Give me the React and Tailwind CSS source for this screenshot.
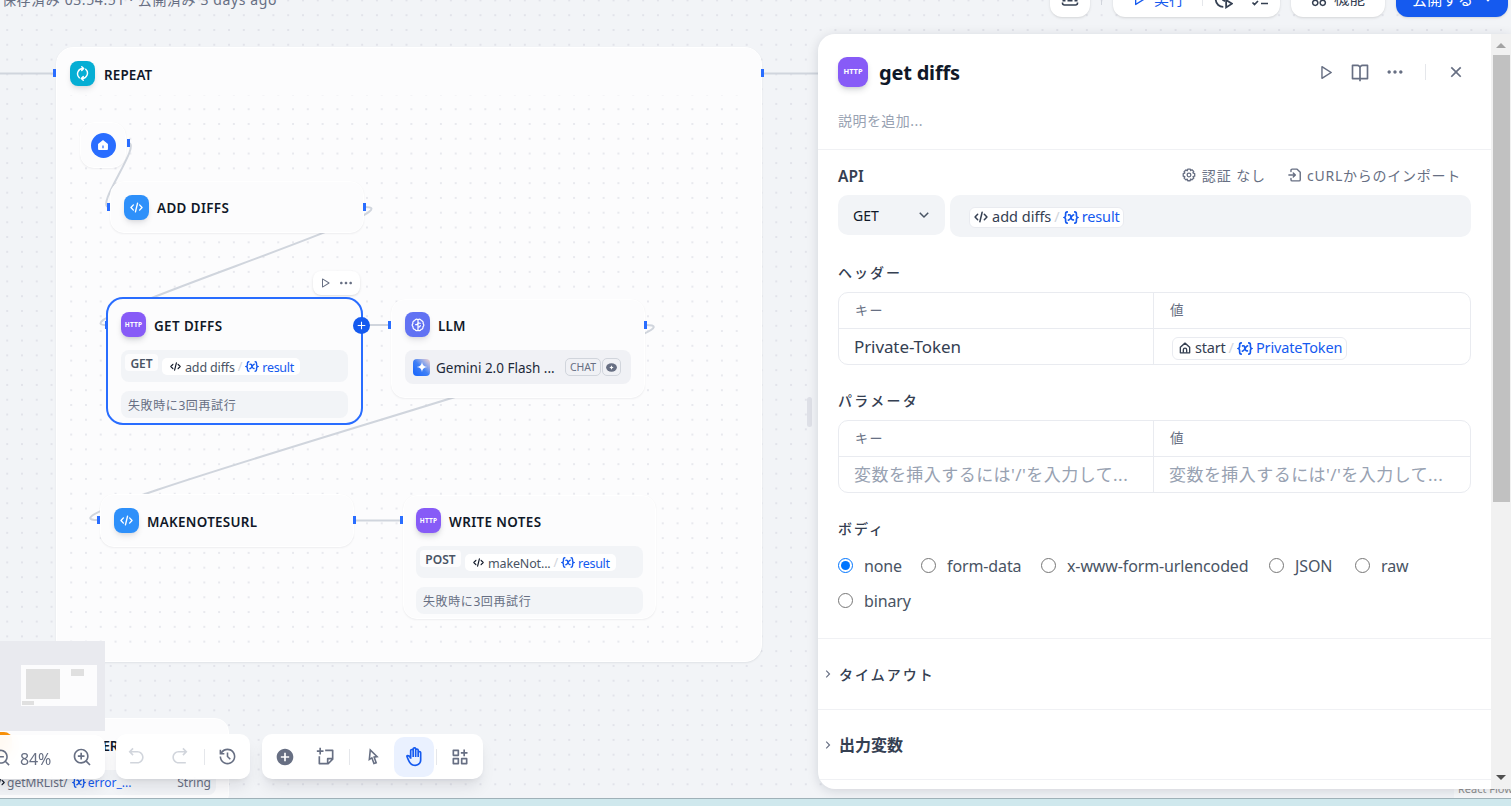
import React, { useState } from 'react';
import {
  RiAddCircleFill,
  RiAddLine,
  RiApps2AddLine,
  RiArrowDownSLine,
  RiArrowGoBackLine,
  RiArrowGoForwardLine,
  RiArrowRightSLine,
  RiBookOpenLine,
  RiCloseLine,
  RiCursorLine,
  RiFunctionAddLine,
  RiHand,
  RiHistoryLine,
  RiMoreFill,
  RiPlayLargeLine,
  RiStickyNoteAddLine,
  RiZoomInLine,
  RiZoomOutLine,
} from 'react-icons/ri';

const CodeIcon = ({ className }) => (
  <svg viewBox="0 0 16 16" className={className} fill="none" stroke="currentColor" strokeWidth="1.7" strokeLinecap="round" strokeLinejoin="round">
    <path d="M4.2 4.8 1.2 8l3 3.2M11.8 4.8l3 3.2-3 3.2M9.3 2.6 6.7 13.4" />
  </svg>
);

const LoopIcon = ({ className }) => (
  <svg viewBox="0 0 16 16" className={className} fill="none" stroke="currentColor" strokeWidth="1.5" strokeLinecap="round" strokeLinejoin="round">
    <path d="M4.600 12.600A5.700 5.700 0 0 1 8.800 2.700M7.200.800 9.300 2.800 7.200 4.900M11.400 3.400A5.700 5.700 0 0 1 7.200 13.300M8.800 11.100 6.700 13.200l2.100 2" />
  </svg>
);

const HomeIcon = ({ className }) => (
  <svg viewBox="0 0 16 16" className={className} fill="none" stroke="currentColor" strokeWidth="1.8" strokeLinejoin="round">
    <path d="M1.800 7 8 1.500 14.200 7v7.400H1.800z" />
    <path d="M5.800 14.400V10.400a2.200 2.200 0 0 1 4.400 0v4" />
  </svg>
);

const HomeSolidIcon = ({ className }) => (
  <svg viewBox="0 0 16 16" className={className} fill="currentColor">
    <path fillRule="evenodd" d="M8 1.2 14.2 6.2a1 1 0 0 1 .4.8v6.4a1.2 1.2 0 0 1-1.2 1.2H2.6a1.2 1.2 0 0 1-1.2-1.2V7a1 1 0 0 1 .4-.8zM7.2 8.6v3.6h1.6V8.6z" />
  </svg>
);

const VariableIcon = ({ className }) => (
  <svg viewBox="0 0 16 14" className={className} fill="none" stroke="currentColor" strokeWidth="1.8" strokeLinecap="round">
    <path d="M4 1C2.4 1 2.2 2 2.2 3.2v1.6C2.2 6 1.8 6.6.9 7c.9.4 1.3 1 1.3 2.2v1.6C2.2 12 2.4 13 4 13M12 1c1.600 0 1.800 1 1.800 2.200v1.600c0 1.200.4 1.800 1.300 2.200-.9.4-1.300 1-1.300 2.200v1.600c0 1.200-.2 2.200-1.800 2.200" />
    <path d="M5.4 4.2c1.800-.6 2 .4 2.400 2.400.5 2.200.8 3.400 2.800 3M10.800 4.200C8.600 4 7.600 10.200 5.200 9.800" />
  </svg>
);

const BrainIcon = ({ className }) => (
  <svg viewBox="0 0 16 16" className={className} fill="none" stroke="currentColor" strokeWidth="1.4" strokeLinecap="round" strokeLinejoin="round">
    <path d="M8 2.2C6.6.8 4.5 1.4 4.2 3 2.400 3.400 1.700 5 2.200 6.300 1 7.400 1.100 9 2.300 9.900c-.3 1.700.7 2.900 2.200 3.100C5.100 14.700 7 15 8 13.800 9 15 10.900 14.700 11.500 13c1.500-.2 2.500-1.400 2.200-3.100 1.200-.9 1.300-2.500.1-3.600.5-1.300-.2-2.900-2-3.300C11.500 1.400 9.400.8 8 2.200zM8 2.200v11.600M5.300 7.600c1.500 0 2.700-.5 2.700-2.200M10.700 6c-1.500 0-2.700-.3-2.700-1.300M8 10.600c1.400 0 2.500-.5 2.700-1.800" />
  </svg>
);

const GearIcon = ({ className }) => (
  <svg viewBox="0 0 16 16" className={className} fill="none" stroke="currentColor" strokeWidth="1.5" strokeLinejoin="round">
    <path d="M6.500 1.200h3l.4 1.700 1.500-.9 2 2-.9 1.500 2 .9v3l-1.900.4.9 1.700-2.100 2-1.500-.9-.6 2h-2.800l-.5-1.900-1.600.9-2-2 .9-1.600-1.900-.6V6.400l1.800-.6-.8-1.600 2-2 1.600.9z" />
    <circle cx="8" cy="8" r="2.100" />
  </svg>
);

const ImportIcon = ({ className }) => (
  <svg viewBox="0 0 16 16" className={className} fill="none" stroke="currentColor" strokeWidth="1.6" strokeLinecap="round" strokeLinejoin="round">
    <path d="M3.400 4V2.700c0-.9.5-1.400 1.400-1.400h5.600L14 4.900v8.400c0 .9-.5 1.400-1.400 1.400H4.800c-.9 0-1.400-.5-1.400-1.400V12M1 8h7.200M6 5.600 8.400 8 6 10.400" />
  </svg>
);

const PanelRule = () => <div className="h-px shrink-0 bg-[#f0f1f4]" />;

const HttpBadge = ({ className }) => (
  <div className={`flex shrink-0 items-center justify-center bg-[#875bf7] font-bold text-white shadow-md shadow-gray-900/15 ${className}`}>
    HTTP
  </div>
);

const CodeBadge = () => (
  <div className="flex size-[25px] shrink-0 items-center justify-center rounded-[8px] bg-[#2e90fa] text-white shadow-md shadow-gray-900/10">
    <CodeIcon className="size-[13px]" />
  </div>
);

const NodeTitle = ({ children, className = '' }) => (
  <div className={`whitespace-nowrap pt-0.5 text-[13.4px] font-semibold leading-5 text-[#101828] ${className}`}>{children}</div>
);

const nodeShell = 'absolute rounded-[14px] border border-white bg-[#fcfcfd] shadow-[0_1px_2px_rgba(16,24,40,0.06)]';

const handles = [
  [53, 69], [761, 69], [127, 139], [107, 203], [363, 203], [105, 321],
  [388, 321], [644, 321], [97, 516], [353, 516], [400, 516],
];

const edges = [
  'M0 73.500H54',
  'M763 73.500H830',
  'M128 143C143 143 94 207 109 207',
  'M365 207C425 207 47 325 107 325',
  'M362 325H389',
  'M646 325C736 325 8 520 98 520',
  'M355 520.500H401',
];

const DotGrid = ({ id, x, y, className }) => (
  <svg className={className}>
    <pattern id={id} x={x} y={y} width="14.79" height="14.79" patternUnits="userSpaceOnUse">
      <circle cx="1" cy="1" r="1" fill="#dcdee6" />
    </pattern>
    <rect width="100%" height="100%" fill={`url(#${id})`} />
  </svg>
);

const HttpNode = ({ title, method, source, methodClass, sourceClass, titleClass }) => (
  <>
    <div className="flex items-center gap-2">
      <HttpBadge className="size-[25px] rounded-[8px] text-[6.5px] tracking-[0.2px]" />
      <NodeTitle className={titleClass}>{title}</NodeTitle>
    </div>
    <div className="mt-[13px] flex h-8 items-start rounded-lg bg-[#f2f4f7] pl-1">
      <div className={`mt-1 flex h-[17px] items-center justify-center rounded bg-[#fcfcfd] pt-0.5 text-[12px] font-semibold text-[#495464] ${methodClass}`}>{method}</div>
      <div className={`ml-1 mt-2 flex h-[17px] items-center whitespace-nowrap rounded-[5px] bg-white pl-2 text-[12.500px] tracking-[-0.15px] text-[#495464] ${sourceClass}`}>
        <CodeIcon className="mr-1 size-[11px] shrink-0 text-[#101828]" />
        <span className="pt-[3px]">{source}</span>
        <span className="mx-[3px] pt-0.5 text-gray-300">/</span>
        <VariableIcon className="mr-[3px] h-[11px] w-[14px] shrink-0 text-[#155aef]" />
        <span className="pt-[3px] tracking-[-0.3px] text-[#155aef]">result</span>
      </div>
    </div>
    <div className="mt-[9px] flex h-[27px] items-center whitespace-nowrap rounded-lg bg-[#f2f4f7] pl-[7px] pt-0.5 text-[12px] tracking-[0.6px] text-[#676f83]">
      失敗時に3回再試行
    </div>
  </>
);

const Canvas = () => (
  <div className="absolute inset-0">
    <DotGrid id="outer-dots" x="6.2" y="14.2" className="absolute inset-0 size-full" />

    {/* loop container */}
    <div className="absolute left-[56px] top-[47px] h-[615px] w-[706px] rounded-[17px] border border-white bg-[#fcfcfd] shadow-[0_1px_2px_rgba(16,24,40,0.08)]">
      <div className="flex items-center gap-[9px] pl-[13px] pt-[13px]">
        <div className="flex size-[25px] items-center justify-center rounded-[8px] bg-[#06aed4] text-white shadow-md shadow-gray-900/10">
          <LoopIcon className="size-[15px]" />
        </div>
        <NodeTitle className="tracking-[0.15px]">REPEAT</NodeTitle>
      </div>
      <DotGrid id="loop-dots" x="0.2" y="13.2" className="absolute left-[13px] top-[47px] h-[552px] w-[680px] opacity-80" />
    </div>

    <svg className="absolute inset-0 size-full" fill="none" stroke="#d0d5dd" strokeWidth="2">
      {edges.map(d => (
        <path key={d} d={d} />
      ))}
    </svg>

    <div className={`${nodeShell} left-[80px] top-[122px] flex size-[46px] items-center justify-center`}>
      <div className="flex size-[25px] items-center justify-center rounded-full bg-[#296dff] text-white">
        <HomeSolidIcon className="size-3" />
      </div>
    </div>

    <div className={`${nodeShell} left-[110px] top-[181px] flex h-[52px] w-[254px] items-center gap-2 pl-[13px]`}>
      <CodeBadge />
      <NodeTitle className="tracking-[0.4px]">ADD DIFFS</NodeTitle>
    </div>

    <div className="absolute left-[106px] top-[297px] h-[128px] w-[257px] rounded-[17px] border-2 border-[#296dff] bg-[#fcfcfd] px-[13px] pt-[13px]">
      <HttpNode title="GET DIFFS" method="GET" source="add diffs" methodClass="w-[33px]" sourceClass="w-[138px]" titleClass="tracking-[0.4px]" />
    </div>

    <div className={`${nodeShell} left-[391px] top-[299px] h-[99px] w-[254px] px-[13px] pt-[12px]`}>
      <div className="flex items-center gap-2">
        <div className="flex size-[25px] items-center justify-center rounded-[8px] bg-[#6172f3] text-white shadow-md shadow-gray-900/10">
          <BrainIcon className="size-[14px]" />
        </div>
        <NodeTitle className="tracking-[0.2px]">LLM</NodeTitle>
      </div>
      <div className="mt-[13px] flex h-[34px] items-center rounded-lg bg-[#f0f1f5] pl-2">
        <div className="flex size-[17px] items-center justify-center rounded bg-gradient-to-tr from-[#0f62fe] via-[#4080f5] to-[#fbd5cb] text-white">
          <svg viewBox="0 0 16 16" className="size-3" fill="currentColor">
            <path d="M8 1c.7 4.500 2.500 6.300 7 7-4.500.7-6.300 2.500-7 7-.7-4.500-2.500-6.300-7-7 4.500-.7 6.300-2.500 7-7z" />
          </svg>
        </div>
        <div className="ml-1.5 w-[129px] whitespace-nowrap pt-0.5 text-[13.5px] text-[#1d2939]">Gemini 2.0 Flash ...</div>
        <div className="flex h-[18px] w-9 items-center justify-center rounded-[5px] border border-gray-300 pt-0.5 text-[10.500px] text-[#676f83]">CHAT</div>
        <div className="ml-px flex h-[18px] w-[19px] items-center justify-center rounded-[5px] border border-gray-300 text-[#676f83]">
          <svg viewBox="0 0 12 10" className="h-[9px] w-[11px]">
            <ellipse cx="6" cy="5" rx="6" ry="4.600" fill="currentColor" />
            <path d="M6 2.600 6.700 4.300 8.400 5l-1.700.7L6 7.400 5.300 5.700 3.600 5l1.700-.7z" fill="white" />
          </svg>
        </div>
      </div>
    </div>

    <div className={`${nodeShell} left-[100px] top-[494px] flex h-[53px] w-[254px] items-center gap-2 pl-[13px]`}>
      <CodeBadge />
      <NodeTitle className="tracking-[0.3px]">MAKENOTESURL</NodeTitle>
    </div>

    <div className={`${nodeShell} left-[403px] top-[495px] h-[124px] w-[253px] px-[12px] pt-[12px]`}>
      <HttpNode title="WRITE NOTES" method="POST" source="makeNot..." methodClass="w-[41px]" sourceClass="w-[151px]" titleClass="tracking-[0.4px]" />
    </div>

    {handles.map(([left, top]) => (
      <div key={`${left}-${top}`} className="absolute h-2 w-[3px] bg-[#296dff]" style={{ left, top }} />
    ))}

    <div className="absolute left-[353px] top-[317px] flex size-[17px] items-center justify-center rounded-full bg-[#155aef] text-white">
      <RiAddLine className="size-[13px]" />
    </div>
    <div className="absolute left-[313px] top-[271px] flex h-[24px] w-[47px] items-center justify-center gap-[7px] rounded-[8px] bg-white text-[#676f83] shadow">
      <RiPlayLargeLine className="size-3" />
      <RiMoreFill className="size-4" />
    </div>

    {/* node partly hidden by the controls */}
    <div className="absolute left-[-25px] top-[718px] h-[90px] w-[254px] rounded-[14px] border border-white bg-[#fcfcfd]">
      <div className="flex items-center gap-2 pl-[11px] pt-[13px]">
        <div className="size-[25px] rounded-[8px] bg-[#f79009]" />
        <NodeTitle className="w-[98px] pt-0 text-right tracking-[-0.3px]">ER</NodeTitle>
      </div>
      <div className="mx-3 mt-[13px] flex h-[25px] items-center rounded-lg bg-[#f2f4f7] pl-[6px] text-[12px] text-[#676f83]">
        <CodeIcon className="mr-0.5 size-[11px] text-[#101828]" />
        getMRList/
        <VariableIcon className="ml-1 mr-[2px] h-[11px] w-[14px] text-[#155aef]" />
        <span className="text-[#155aef]">error_...</span>
        <span className="ml-auto mr-[5px]">String</span>
      </div>
    </div>
  </div>
);

const BottomControls = () => (
  <>
    <div className="absolute left-0 top-[641px] h-[90px] w-[105px] bg-[#e9eaef]">
      <svg viewBox="0 0 105 90" className="size-full">
        <path d="M21 24h76v41H21z" fill="#fcfcfd" />
        <path d="M26 28h34v30H26zM71 28h13v7H71zM22 60h12v4H22z" fill="#e0e0e0" />
      </svg>
    </div>

    <div className="absolute bottom-[27px] left-[-20px] flex items-end text-[#676f83]">
      <div className="flex h-11 w-[125px] items-center rounded-[10px] bg-white/95 pl-3 shadow-lg shadow-gray-900/10 backdrop-blur-sm">
        <RiZoomOutLine className="size-[19px] shrink-0" />
        <span className="ml-[9px] w-[42px] pt-1 text-[16px] tracking-[-0.2px]">84%</span>
        <RiZoomInLine className="ml-2.5 size-5 shrink-0" />
      </div>
      <div className="ml-[11px] flex h-[45px] w-[134px] items-center rounded-[10px] bg-white/95 pl-[11px] shadow-lg shadow-gray-900/10 backdrop-blur-sm">
        <RiArrowGoBackLine className="size-[19px] text-gray-300" />
        <RiArrowGoForwardLine className="ml-6 size-[19px] text-gray-300" />
        <div className="ml-[15px] h-4 w-px bg-gray-200" />
        <RiHistoryLine className="ml-[13px] size-[19px]" />
      </div>
      <div className="ml-3 flex h-[45px] w-[221px] items-center rounded-[10px] bg-white pl-[13px] shadow-lg shadow-gray-900/10">
        <RiAddCircleFill className="size-5" />
        <RiStickyNoteAddLine className="ml-[21px] size-[20px]" />
        <div className="ml-[13px] h-4 w-px bg-gray-200" />
        <RiCursorLine className="ml-[13px] size-[19px]" />
        <div className="ml-3 flex size-10 items-center justify-center rounded-[10px] bg-[#eaf1ff] text-[#155aef]">
          <RiHand className="size-5" />
        </div>
        <div className="ml-0.5 h-4 w-px bg-gray-200" />
        <RiFunctionAddLine className="ml-[13px] size-[20px]" />
      </div>
    </div>
  </>
);

const TopBar = () => (
  <>
    <div className="absolute left-[2px] top-[-12px] whitespace-pre text-[14px] leading-6 tracking-[0.6px] text-[#676f83]">保存済み 03:54:51 · 公開済み 3 days ago</div>
    <div className="absolute right-[3px] top-[-23px] flex h-10 text-[#354052]">
      <div className="flex w-10 items-center justify-center rounded-xl bg-white shadow">
        <svg viewBox="0 0 18 18" className="mt-1 size-[18px]" fill="none" stroke="currentColor" strokeWidth="1.6">
          <path d="M1.500 7V4a2 2 0 0 1 2-2h11a2 2 0 0 1 2 2v3M1.500 12.500v.5a2 2 0 0 0 2 2h11a2 2 0 0 0 2-2v-.5M1.500 10.700h3M6.500 10.700h5M13.500 10.700h3" />
        </svg>
      </div>
      <div className="ml-[11px] mt-3 h-4 w-px bg-gray-300" />
      <div className="ml-[11px] flex w-[167px] items-center rounded-xl bg-white pt-1 shadow">
        <div className="flex items-center pl-[18px] text-[15px] text-[#155aef]">
          <RiPlayLargeLine className="size-4" />
          <span className="ml-[7px]">実行</span>
        </div>
        <div className="ml-[18px] h-[14px] w-px bg-gray-200" />
        <svg viewBox="0 0 18 18" className="ml-[11px] size-[19px]" fill="none" stroke="currentColor" strokeWidth="1.700">
          <path d="M8.800 16A7 7 0 1 1 15.500 7.500M8.500 5v4.500l2 1" />
          <path d="M11.500 9.500v7l5.500-3.500z" />
        </svg>
        <svg viewBox="0 0 18 18" className="ml-[18px] size-[18px]" fill="none" stroke="currentColor" strokeWidth="1.700">
          <path d="m1.500 4.500 2 2L7 3M10 5h7M1.500 12.500l2 2L7 11M10 13.500h7" />
        </svg>
      </div>
      <div className="ml-[11px] flex w-[94px] items-center rounded-xl bg-white pl-[19px] pt-1 text-[15.500px] shadow">
        <RiApps2AddLine className="mr-[6px] size-[18px]" />
        機能
      </div>
      <div className="ml-[11px] flex w-[112px] items-center rounded-xl bg-[#155aef] pl-4 pt-1 text-[15px] tracking-[0.3px] text-white shadow">
        公開する
        <RiArrowDownSLine className="ml-[7px] size-4" />
      </div>
    </div>
  </>
);

const KeyValueTable = ({ children }) => (
  <div className="grid h-[73px] grid-cols-[315px_1fr] grid-rows-[36px_1fr] overflow-hidden rounded-[10px] border border-[#e9ebf0] text-[#676f83]">
    <div className="flex items-center border-b border-r border-[#e9ebf0] pl-4 text-[13px] tracking-[1.500px]">キー</div>
    <div className="flex items-center border-b border-[#e9ebf0] pl-4 text-[13.500px]">値</div>
    {children}
  </div>
);

const VariableTag = ({ icon, source, name, className }) => (
  <div className={`flex items-center whitespace-nowrap rounded-md border border-[#e9ebf0] bg-white text-[14.500px] text-[#354052] ${className}`}>
    {icon}
    {source}
    <span className="mx-[3px] text-gray-300">/</span>
    <VariableIcon className="mr-[3px] h-[13px] w-4 shrink-0 text-[#155aef]" />
    <span className="tracking-[-0.15px] text-[#155aef]">{name}</span>
  </div>
);

const bodyTypes = [
  { name: 'none', width: 'w-[83px]' },
  { name: 'form-data', width: 'w-[120px]' },
  { name: 'x-www-form-urlencoded', width: 'w-[228px]' },
  { name: 'JSON', width: 'w-[86px]' },
  { name: 'raw', width: 'w-[60px]' },
  { name: 'binary', width: 'w-[100px]' },
];

const placeholder = "変数を挿入するには'/'を入力して...";

const DetailPanel = () => {
  const [bodyType, setBodyType] = useState('none');

  return (
    <div className="absolute left-[818px] top-[34px] flex h-[755px] w-[693px] overflow-hidden rounded-l-[17px] bg-white shadow-[0_2px_12px_rgba(16,24,40,0.14)]">
      <div className="flex min-w-0 flex-1 flex-col">
        <div className="flex h-[53px] items-end pl-5 pr-[25px]">
          <HttpBadge className="size-[30px] rounded-[9px] text-[7.5px]" />
          <h2 className="ml-[11px] text-[20px] font-bold leading-7 tracking-[-0.2px] text-[#101828]">get diffs</h2>
          <div className="ml-auto flex h-[30px] items-center text-[#676f83]">
            <RiPlayLargeLine className="size-[17px]" />
            <RiBookOpenLine className="ml-4 size-5" />
            <RiMoreFill className="ml-[15px] size-5" />
            <div className="ml-5 h-4 w-px bg-gray-200" />
            <RiCloseLine className="ml-5 size-5" />
          </div>
        </div>
        <div className="mt-[22px] h-[40px] pl-5 text-[14px] leading-6 tracking-[0.45px] text-[#98a2b2]">説明を追加...</div>
        <PanelRule />

        <div className="flex flex-col px-5 text-[#354052]">
          <div className="mt-[14px] flex h-[22px] items-center">
            <span className="pt-1 text-[15.500px] font-semibold">API</span>
            <div className="ml-auto mr-[10px] flex items-center whitespace-nowrap text-[14px] text-[#676f83]">
              <GearIcon className="mr-[6px] size-[14px]" />
              <span className="tracking-[0.9px]">認証 なし</span>
              <ImportIcon className="ml-[22px] mr-[5px] size-[14px]" />
              <span className="tracking-[0.75px]">cURLからのインポート</span>
            </div>
          </div>

          <div className="mt-[9px] flex items-start gap-[5px]">
            <div className="flex h-10 w-[107px] items-center justify-between rounded-[10px] bg-[#f2f4f7] pl-[15px] pr-3 text-[14px] text-[#101828]">
              GET
              <RiArrowDownSLine className="size-[18px] text-[#495464]" />
            </div>
            <div className="flex h-[42px] flex-1 items-center rounded-[10px] bg-[#f2f4f7] pl-[19px]">
              <VariableTag
                icon={<CodeIcon className="mr-1 size-[14px] shrink-0" />}
                source="add diffs"
                name="result"
                className="mt-[2px] h-[21px] w-[155px] pl-1"
              />
            </div>
          </div>

          <h3 className="mb-[8px] mt-[25px] h-[22px] text-[14px] font-medium tracking-[2px]">ヘッダー</h3>
          <KeyValueTable>
            <div className="flex items-center border-r border-[#e9ebf0] pl-[15px] pt-px text-[17px] tracking-[-0.1px] text-[#354052]">Private-Token</div>
            <div className="flex items-center pl-[18px]">
              <VariableTag
                icon={<HomeIcon className="mr-1 size-3 shrink-0" />}
                source={<span className="tracking-[-0.2px]">start</span>}
                name="PrivateToken"
                className="mt-[3px] h-[23px] w-[175px] pl-[6px]"
              />
            </div>
          </KeyValueTable>

          <h3 className="mb-[8px] mt-[25px] h-[22px] text-[14px] font-medium tracking-[2.300px]">パラメータ</h3>
          <KeyValueTable>
            <div className="flex items-center whitespace-nowrap border-r border-[#e9ebf0] pl-[15px] text-[17px] tracking-[0.45px] text-[#98a2b2]">{placeholder}</div>
            <div className="flex items-center whitespace-nowrap pl-[15px] text-[17px] tracking-[0.45px] text-[#98a2b2]">{placeholder}</div>
          </KeyValueTable>

          <h3 className="mb-px mt-[25px] h-[22px] text-[14px] font-medium tracking-[2px]">ボディ</h3>
          <div className="flex h-[97px] flex-wrap content-start pt-[7px] text-[16px] tracking-[-0.12px] text-[#495464]">
            {bodyTypes.map(({ name, width }) => (
              <label key={name} className={`flex h-[35px] items-center whitespace-nowrap ${width}`}>
                <input
                  type="radio"
                  name="body-type"
                  checked={bodyType === name}
                  onChange={() => setBodyType(name)}
                  className="m-0 mr-[11px] size-[15px] shrink-0"
                />
                {name}
              </label>
            ))}
          </div>
        </div>
        <PanelRule />

        <div className="flex h-[70px] shrink-0 items-center pl-[3px] text-[#354052]">
          <RiArrowRightSLine className="size-[14px] text-[#676f83]" />
          <h3 className="ml-1 text-[14px] font-medium tracking-[2px]">タイムアウト</h3>
        </div>
        <PanelRule />
        <div className="flex h-[69px] shrink-0 items-center pl-[3px] text-[#354052]">
          <RiArrowRightSLine className="size-[14px] text-[#676f83]" />
          <h3 className="ml-1 text-[16px] font-semibold">出力変数</h3>
        </div>
        <PanelRule />
      </div>

      {/* scrollbar */}
      <div className="flex w-5 flex-col items-center bg-[#f1f1f1]">
        <svg viewBox="0 0 10 5" className="mt-[9px] h-[5px] w-[10px]" fill="#a3a3a3"><path d="M5 0 10 5H0z" /></svg>
        <div className="mt-[7px] h-[447px] w-[17px] bg-[#c1c1c1]" />
        <svg viewBox="0 0 10 5" className="mb-[9px] mt-auto h-[5px] w-[10px]" fill="#505050"><path d="M0 0h10L5 5z" /></svg>
      </div>
    </div>
  );
};

export default function App() {
  return (
    <div className="relative h-[806px] w-[1511px] overflow-hidden bg-[#f2f4f7] font-['Noto_Sans','Noto_Sans_CJK_JP',sans-serif]">
      <Canvas />
      <TopBar />
      <BottomControls />
      {/* panel resize grip */}
      <div className="absolute left-[807px] top-[397px] h-[30px] w-[5px] rounded-sm bg-[#dfe1e8]" />
      <div className="absolute bottom-2 right-0 h-4 w-[57px] overflow-hidden whitespace-nowrap bg-white/50 pl-1 text-[11px] leading-[14px] text-[#8f8f8f]">
        React Flow
      </div>
      <DetailPanel />
      <div className="absolute inset-x-0 bottom-0 h-2 border-t border-[#9fb1b8] bg-[#cfe8ed]" />
    </div>
  );
}
